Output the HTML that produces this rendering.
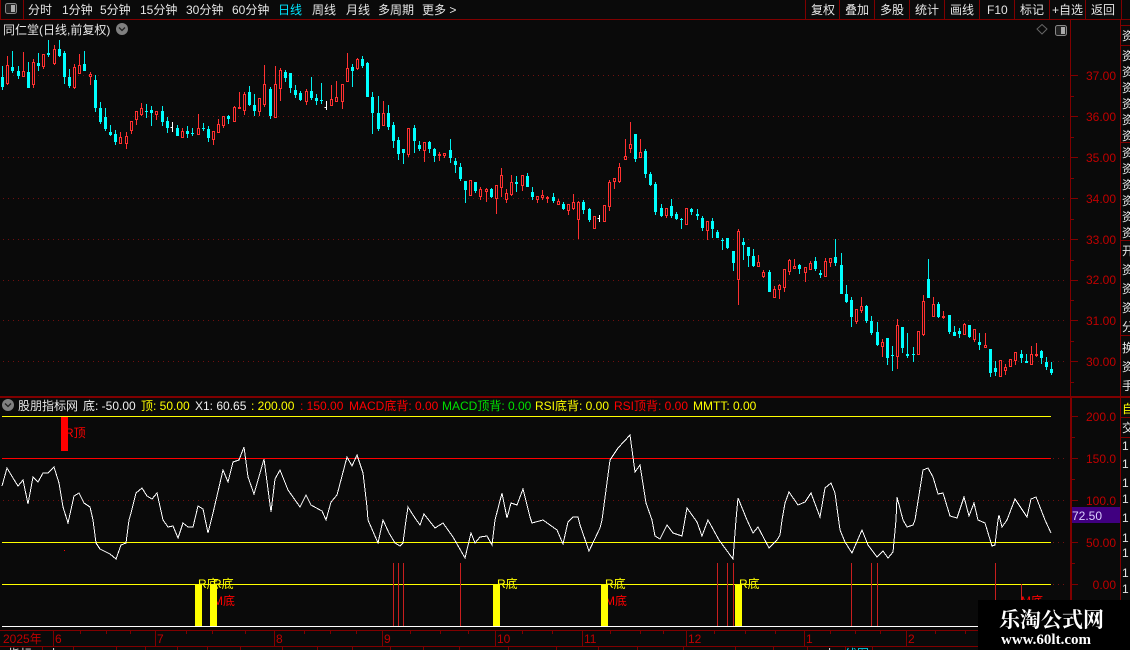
<!DOCTYPE html>
<html>
<head>
<meta charset="utf-8">
<style>
html,body{margin:0;padding:0;background:#0a0a0a;width:1130px;height:650px;overflow:hidden}
svg{display:block}
text{font-family:"Liberation Sans","WenQuanYi Zen Hei","Noto Sans CJK SC",sans-serif;font-size:12px}
.t{fill:#e6e6e6}
.a{fill:#c00000;text-anchor:end}
.s{fill:#e6e6e6}
</style>
</head>
<body>
<svg width="1130" height="650" viewBox="0 0 1130 650" xmlns="http://www.w3.org/2000/svg">
<rect width="1130" height="650" fill="#0a0a0a"/>

<!-- grid dots -->
<g stroke="#701010" stroke-width="1" stroke-dasharray="1 4" fill="none" shape-rendering="crispEdges">
<path d="M3 75.5H1068M3 116.5H1068M3 157.5H1068M3 198.5H1068M3 239.5H1068M3 280.5H1068M3 320.5H1068M3 361.5H1068"/>
<path d="M3 500.5H1068M1053 458.5H1068M1053 542.5H1068M1053 584.5H1068"/>
</g>

<!-- frame lines -->
<g fill="#800000" shape-rendering="crispEdges">
<rect x="0" y="19" width="1130" height="1"/>
<rect x="0" y="0" width="1" height="19"/>
<rect x="23" y="0" width="1" height="19"/>
<rect x="805" y="0" width="1" height="19"/><rect x="839" y="0" width="1" height="19"/><rect x="874" y="0" width="1" height="19"/><rect x="909" y="0" width="1" height="19"/><rect x="944" y="0" width="1" height="19"/><rect x="979" y="0" width="1" height="19"/><rect x="1014" y="0" width="1" height="19"/><rect x="1049" y="0" width="1" height="19"/><rect x="1085" y="0" width="1" height="19"/><rect x="1121" y="0" width="1" height="19"/>
<rect x="1070" y="20" width="1" height="376"/>
<rect x="1070" y="396" width="2" height="234"/>
<rect x="1120" y="20" width="1" height="610"/>
<rect x="0" y="396" width="1130" height="2"/>
<rect x="1121" y="25" width="9" height="1"/><rect x="1121" y="45" width="9" height="1"/><rect x="1121" y="142" width="9" height="1"/><rect x="1121" y="240" width="9" height="1"/><rect x="1121" y="335" width="9" height="1"/><rect x="1121" y="417" width="9" height="1"/><rect x="1121" y="437" width="9" height="1"/>
<rect x="0" y="630" width="1130" height="1"/>
<rect x="0" y="646" width="1130" height="1"/>
</g>

<!-- axis ticks -->
<path shape-rendering="crispEdges" stroke="#800000" fill="none" d="M1071 75.5h7M1071 116.5h7M1071 157.5h7M1071 198.5h7M1071 239.5h7M1071 280.5h7M1071 320.5h7M1071 361.5h7M1071 96.5h3M1071 137.5h3M1071 178.5h3M1071 219.5h3M1071 260.5h3M1071 300.5h3M1071 341.5h3M1071 382.5h3M1072 416.5h6M1072 458.5h6M1072 500.5h6M1072 542.5h6M1072 584.5h6M1072 437.5h3M1072 479.5h3M1072 563.5h3M1072 605.5h3M53.5 631V646M155.5 631V646M274.5 631V646M382.5 631V646M495.5 631V646M582.5 631V646M686.5 631V646M804.5 631V646M906.5 631V646M80.5 631v3M106.5 631v3M130.5 631v3M186.5 631v3M212.5 631v3M245.5 631v3M304.5 631v3M330.5 631v3M356.5 631v3M410.5 631v3M440.5 631v3M468.5 631v3M522.5 631v3M552.5 631v3M610.5 631v3M640.5 631v3M663.5 631v3M714.5 631v3M745.5 631v3M775.5 631v3M830.5 631v3M855.5 631v3M880.5 631v3M935.5 631v3M965.5 631v3M42.5 647v3M73.5 647v3M116.5 647v3M145.5 647v3M177.5 647v3M207.5 647v3M240.5 647v3M282.5 647v3M317.5 647v3M352.5 647v3M390.5 647v3M423.5 647v3M459.5 647v3M508.5 647v3M556.5 647v3M598.5 647v3M637.5 647v3M683.5 647v3M735.5 647v3M773.5 647v3M807.5 647v3M845.5 647v3M872.5 647v3"/>

<!-- top toolbar -->
<g class="t">
<text class="t" x="28" y="14">分时</text>
<text class="t" x="62" y="14">1分钟</text>
<text class="t" x="100" y="14">5分钟</text>
<text class="t" x="140" y="14">15分钟</text>
<text class="t" x="186" y="14">30分钟</text>
<text class="t" x="232" y="14">60分钟</text>
<text x="278" y="14" fill="#00e6ff">日线</text>
<text class="t" x="312" y="14">周线</text>
<text class="t" x="346" y="14">月线</text>
<text class="t" x="378" y="14">多周期</text>
<text class="t" x="422" y="14">更多 &gt;</text>
<text class="t" x="811" y="14">复权</text>
<text class="t" x="845" y="14">叠加</text>
<text class="t" x="880" y="14">多股</text>
<text class="t" x="915" y="14">统计</text>
<text class="t" x="950" y="14">画线</text>
<text class="t" x="987" y="14">F10</text>
<text class="t" x="1020" y="14">标记</text>
<text class="t" x="1052" y="14">+自选</text>
<text class="t" x="1091" y="14">返回</text>
</g>
<!-- layout icon -->
<rect x="5.5" y="3.5" width="11" height="10" rx="2" fill="#222" stroke="#888"/>
<rect x="11" y="5" width="4" height="7" fill="#aaa"/>

<!-- title -->
<text class="t" x="3" y="34">同仁堂(日线,前复权)</text>
<circle cx="122" cy="29" r="6" fill="#808080"/>
<path d="M119 27.5l3 3 3-3" fill="none" stroke="#222" stroke-width="1.3"/>
<path d="M1042 24.5l5 4.5-5 5-5-5z" fill="none" stroke="#666"/>
<rect x="1055.5" y="25.5" width="11" height="10" rx="2" fill="#222" stroke="#888"/>
<rect x="1061" y="27" width="4" height="7" fill="#aaa"/>

<!-- candles: cyan wicks -->
<path shape-rendering="crispEdges" transform="translate(.5 0)" stroke="#00f0f0" fill="none" d="M2 66V90M12 51V73M18 66V79M28 62V88M38 53V71M48 40V57M59 40V57M64 51V84M69 69V88M84 51V71M95 75V112M100 102V124M105 108V131M110 125V136M115 130V145M146 104V118M151 106V126M162 106V126M167 117V133M177 125V136M187 126V138M192 128V136M203 123V131M208 126V142M228 115V124M249 86V106M254 94V116M270 87V119M285 70V82M290 73V93M295 85V98M300 91V101M311 77V100M316 94V105M321 83V104M352 64V87M362 56V68M367 62V97M372 92V134M378 96V131M388 105V130M393 122V148M398 137V160M403 149V164M414 125V153M419 141V151M429 141V153M434 148V162M450 139V163M455 158V173M460 163V181M465 181V203M475 182V193M491 188V198M516 176V192M527 173V187M532 187V200M553 193V203M563 202V210M583 200V214M589 208V222M635 134V162M645 149V178M650 172V186M655 182V215M661 204V217M671 199V218M676 212V220M681 218V229M691 208V215M697 209V220M702 216V231M712 218V238M717 230V238M722 238V250M727 238V249M733 251V271M743 238V260M748 247V267M753 249V267M769 270V292M799 264V274M815 257V271M820 270V278M835 239V266M841 253V294M846 285V303M851 297V327M866 305V323M871 316V335M877 322V346M887 338V365M892 346V371M902 327V353M907 333V358M913 347V362M928 259V298M938 302V318M949 315V334M954 326V336M959 328V338M969 325V338M979 333V350M990 349V377M995 361V376M1021 350V363M1026 354V363M1041 350V364M1046 357V370M1051 362V375"/>
<!-- cyan bodies -->
<path shape-rendering="crispEdges" transform="translate(.5 0)" stroke="#00ffff" stroke-width="3" fill="none" d="M2 77V87M12 67V71M18 71V76M28 72V88M38 63V66M48 53V55M59 49V56M64 53V77M69 77V86M84 64V71M95 80V108M100 108V122M105 117V129M110 132V135M115 134V142M146 111V112M151 110V113M162 111V122M167 121V128M177 128V136M187 131V134M192 133V134M203 128V129M208 129V138M228 116V119M249 92V105M254 105V111M270 89V116M285 72V78M290 73V88M295 90V95M300 93V100M311 91V98M316 98V101M321 100V101M352 67V71M362 59V66M367 63V97M372 97V113M378 113V129M388 113V127M393 125V141M398 140V154M403 149V153M414 128V141M419 145V149M429 142V149M434 149V156M450 150V158M455 161V165M460 167V179M465 181V190M475 182V191M491 189V197M516 182V184M527 176V187M532 192V197M553 197V201M563 204V209M583 202V210M589 209V220M635 134V159M645 151V174M650 174V185M655 184V212M661 208V216M671 206V216M676 214V219M681 219V220M691 209V212M697 214V216M702 218V228M712 221V229M717 232V238M722 240V241M727 238V248M733 251V263M743 242V245M748 247V256M753 256V266M769 272V292M799 265V269M815 261V269M820 273V275M835 257V263M841 265V294M846 294V302M851 300V317M866 306V321M871 321V333M877 332V345M887 338V358M892 355V356M902 327V348M907 354V356M913 354V355M928 279V298M938 304V317M949 315V332M954 332V336M959 331V334M969 325V337M979 342V345M990 349V373M995 368V372M1021 354V358M1026 361V363M1041 351V358M1046 362V367M1051 369V373"/>
<!-- red wicks -->
<path shape-rendering="crispEdges" transform="translate(.5 0)" stroke="#ff3030" fill="none" d="M7 56V85M23 52V76M33 59V88M43 54V69M54 45V65M74 64V89M79 54V73M90 72V85M120 132V143M126 132V149M131 121V134M136 111V125M141 103V116M156 111V120M182 128V137M198 114V134M213 131V145M218 119V132M223 116V128M234 106V121M239 92V109M244 92V115M259 98V116M264 65V107M275 66V118M280 68V101M306 89V105M331 85V105M336 81V101M342 84V109M347 53V81M357 58V70M383 101V125M408 128V157M424 142V162M439 152V161M444 153V158M470 180V195M480 187V200M486 188V202M496 185V214M501 168V197M506 189V203M511 175V196M522 175V191M537 196V203M542 190V200M547 196V203M558 199V205M568 204V215M573 194V210M578 201V239M594 216V228M604 205V222M609 180V211M614 178V189M619 163V183M625 139V160M630 122V153M640 139V158M666 208V218M686 208V224M707 221V240M738 229V305M758 255V266M763 270V278M774 286V297M779 284V299M784 269V292M789 259V275M794 259V269M805 267V282M810 261V269M825 258V276M830 258V267M856 309V324M861 297V313M882 339V357M897 319V369M918 331V354M923 295V336M933 297V316M943 311V319M964 323V334M974 329V342M985 333V348M1000 360V377M1005 364V375M1010 359V367M1015 352V365M1031 346V365M1036 343V357"/>
<!-- red bodies -->
<path shape-rendering="crispEdges" transform="translate(.5 .5)" stroke="#ff3030" fill="#0a0a0a" d="M6 65h2V83h-2zM22 71h2V76h-2zM32 62h2V84h-2zM42 54h2V66h-2zM53 49h2V63h-2zM73 67h2V87h-2zM78 65h2V73h-2zM89 74h2V76h-2zM119 137h2V143h-2zM125 136h2V143h-2zM130 121h2V130h-2zM135 111h2V119h-2zM140 108h2V114h-2zM155 111h2V114h-2zM181 131h2V137h-2zM197 128h2V134h-2zM212 131h2V139h-2zM217 124h2V132h-2zM222 116h2V125h-2zM233 107h2V121h-2zM238 107h2V108h-2zM243 94h2V110h-2zM258 98h2V111h-2zM263 84h2V104h-2zM274 84h2V117h-2zM279 70h2V88h-2zM305 91h2V101h-2zM330 99h2V105h-2zM335 97h2V101h-2zM341 84h2V101h-2zM346 68h2V81h-2zM356 59h2V68h-2zM382 113h2V125h-2zM407 128h2V154h-2zM423 142h2V150h-2zM438 154h2V155h-2zM443 153h2V155h-2zM469 180h2V195h-2zM479 189h2V196h-2zM485 189h2V191h-2zM495 185h2V198h-2zM500 175h2V187h-2zM505 193h2V199h-2zM510 182h2V194h-2zM521 175h2V185h-2zM536 196h2V199h-2zM541 195h2V197h-2zM546 197h2V198h-2zM557 201h2V204h-2zM567 204h2V210h-2zM572 202h2V208h-2zM577 202h2V219h-2zM593 216h2V228h-2zM603 205h2V221h-2zM608 182h2V206h-2zM613 178h2V181h-2zM618 167h2V181h-2zM624 156h2V159h-2zM629 144h2V148h-2zM639 152h2V157h-2zM665 208h2V215h-2zM685 208h2V224h-2zM706 221h2V230h-2zM737 231h2V279h-2zM757 262h2V266h-2zM762 272h2V276h-2zM773 289h2V297h-2zM778 285h2V289h-2zM783 269h2V287h-2zM788 260h2V271h-2zM793 266h2V268h-2zM804 267h2V272h-2zM809 263h2V269h-2zM824 261h2V276h-2zM829 258h2V262h-2zM855 309h2V321h-2zM860 306h2V310h-2zM881 342h2V346h-2zM896 325h2V356h-2zM917 331h2V354h-2zM922 301h2V334h-2zM932 304h2V316h-2zM942 316h2V317h-2zM963 324h2V334h-2zM973 329h2V339h-2zM984 345h2V347h-2zM999 360h2V376h-2zM1004 367h2V370h-2zM1009 359h2V366h-2zM1014 352h2V360h-2zM1030 354h2V364h-2zM1035 354h2V355h-2z"/>
<!-- white doji -->
<path shape-rendering="crispEdges" transform="translate(.5 0)" stroke="#fff" fill="none" d="M172 122V132M170 127.5h2M326 101V110M324 107.5h2M599 215V222M597 218.5h2"/>

<!-- axis labels upper -->
<text class="a" x="1116" y="80">37.00</text>
<text class="a" x="1116" y="121">36.00</text>
<text class="a" x="1116" y="162">35.00</text>
<text class="a" x="1116" y="203">34.00</text>
<text class="a" x="1116" y="244">33.00</text>
<text class="a" x="1116" y="284">32.00</text>
<text class="a" x="1116" y="325">31.00</text>
<text class="a" x="1116" y="366">30.00</text>

<!-- right clipped side text -->
<text class="s" x="1122" y="40">资</text>
<text class="s" x="1122" y="60">资</text><text class="s" x="1122" y="76">资</text><text class="s" x="1122" y="92">资</text><text class="s" x="1122" y="108">资</text><text class="s" x="1122" y="124">资</text><text class="s" x="1122" y="140">资</text>
<text class="s" x="1122" y="157">资</text><text class="s" x="1122" y="173">资</text><text class="s" x="1122" y="189">资</text><text class="s" x="1122" y="205">资</text><text class="s" x="1122" y="221">资</text><text class="s" x="1122" y="237">资</text>
<text class="s" x="1122" y="255">开</text><text class="s" x="1122" y="274">资</text><text class="s" x="1122" y="293">资</text><text class="s" x="1122" y="312">资</text><text class="s" x="1122" y="331">分</text>
<text class="s" x="1122" y="352">换</text><text class="s" x="1122" y="371">资</text><text class="s" x="1122" y="390">手</text>
<text x="1122" y="413" fill="#ffff00">自</text>
<text class="s" x="1122" y="432">交</text>
<text class="s" x="1122" y="450">1</text><text class="s" x="1122" y="468">1</text><text class="s" x="1122" y="487">1</text><text class="s" x="1122" y="503">1</text><text class="s" x="1122" y="522">1</text><text class="s" x="1122" y="542">1</text><text class="s" x="1122" y="557">1</text><text class="s" x="1122" y="577">1</text><text class="s" x="1122" y="593">1</text>

<!-- lower panel header -->
<circle cx="8" cy="405" r="6" fill="#808080"/>
<path d="M5 403.5l3 3 3-3" fill="none" stroke="#222" stroke-width="1.3"/>
<text class="t" x="18" y="410">股朋指标网</text>
<text fill="#f0f0f0" x="83" y="410">底: -50.00</text>
<text fill="#ffff00" x="141" y="410">顶: 50.00</text>
<text fill="#f0f0f0" x="195" y="410">X1: 60.65</text>
<text fill="#ffff00" x="251" y="410">: 200.00</text>
<text fill="#ff0000" x="300" y="410">: 150.00</text>
<text fill="#ff0000" x="349" y="410">MACD底背: 0.00</text>
<text fill="#00e000" x="442" y="410">MACD顶背: 0.00</text>
<text fill="#ffff00" x="535" y="410">RSI底背: 0.00</text>
<text fill="#ff0000" x="614" y="410">RSI顶背: 0.00</text>
<text fill="#ffff00" x="693" y="410">MMTT: 0.00</text>

<!-- lower panel lines -->
<g shape-rendering="crispEdges">
<rect x="2" y="416" width="1049" height="1" fill="#ffff00"/>
<rect x="2" y="458" width="1049" height="1" fill="#ff0000"/>
<rect x="2" y="542" width="1049" height="1" fill="#ffff00"/>
<rect x="2" y="584" width="1049" height="1" fill="#ffff00"/>
<rect x="2" y="626" width="1049" height="1" fill="#ffffff"/>
<rect x="64" y="550" width="1" height="1" fill="#ff0000"/>
<path stroke="#c81e1e" fill="none" d="M393.5 563V626M398.5 563V626M403.5 563V626M460.5 563V626M717.5 563V626M727.5 563V626M733.5 563V626M851.5 563V626M871.5 563V626M877.5 563V626M995.5 563V626M1021.5 584V600"/>
</g>
<text fill="#ff0000" x="65" y="437">R顶</text>
<rect x="61" y="417" width="7" height="34" fill="#ff0000" shape-rendering="crispEdges"/>

<!-- RSI line -->
<polyline fill="none" stroke="#ffffff" stroke-width="1" shape-rendering="crispEdges" points="2,486 7,468 13,478 18,486 23,480 28,504 33,477 38,482 43,473 48,473 54,467 59,483 63,507 68,523 74,496 79,493 84,503 90,507 93,520 96,543 100,549 110,554 116,559 121,545 126,543 129,520 131,513 136,493 142,488 147,496 152,499 157,493 163,520 168,527 173,526 178,538 183,523 188,527 193,527 198,506 203,509 208,533 213,513 223,470 228,482 233,462 239,460 244,447 248,477 254,494 264,459 271,512 275,479 280,470 288,490 300,507 306,495 311,505 322,511 326,520 331,502 337,495 347,457 352,466 357,455 363,473 367,507 368,520 378,543 383,520 389,533 395,543 400,546 403,543 406,520 408,507 415,518 420,525 424,514 435,528 443,523 453,537 465,558 471,533 475,543 480,537 487,536 492,545 495,520 502,493 507,518 511,503 517,505 523,489 530,517 532,523 543,520 557,530 563,544 568,522 573,517 578,517 580,525 589,551 600,528 602,520 610,460 618,448 630,435 635,472 640,465 646,503 652,520 655,536 660,539 667,525 673,533 682,536 687,508 697,522 702,536 708,520 719,540 733,559 736,520 738,498 747,520 753,533 758,527 769,548 777,540 780,535 782,520 785,503 789,492 798,505 805,502 811,493 820,517 825,488 831,483 835,493 840,530 845,542 852,553 862,530 868,545 877,557 883,551 888,558 893,552 896,520 897,497 903,520 907,527 913,525 915,520 923,470 928,468 933,477 938,494 943,493 950,516 957,518 964,497 969,516 974,503 978,520 985,523 992,546 995,545 998,520 999,515 1002,527 1007,520 1015,499 1027,517 1031,499 1036,497 1040,507 1045,520 1051,533"/>

<!-- signal labels (under the bars) -->
<text fill="#ff0000" x="213" y="605">M底</text>
<text fill="#ff0000" x="605" y="605">M底</text>
<text fill="#ff0000" x="1021" y="605">M底</text>
<text fill="#ffff00" x="198" y="588">R底</text>
<text fill="#ffff00" x="213" y="588">R底</text>
<text fill="#ffff00" x="497" y="588">R底</text>
<text fill="#ffff00" x="605" y="588">R底</text>
<text fill="#ffff00" x="739" y="588">R底</text>

<!-- signal bars -->
<g fill="#ffff00" shape-rendering="crispEdges">
<rect x="195" y="585" width="7" height="41"/>
<rect x="210" y="585" width="7" height="41"/>
<rect x="493" y="585" width="7" height="41"/>
<rect x="601" y="585" width="7" height="41"/>
<rect x="735" y="585" width="7" height="41"/>
</g>

<!-- lower axis labels -->
<text class="a" x="1116" y="421">200.0</text>
<text class="a" x="1116" y="463">150.0</text>
<text class="a" x="1116" y="505">100.0</text>
<text class="a" x="1116" y="547">50.00</text>
<text class="a" x="1116" y="589">0.00</text>
<rect x="1072" y="507" width="48" height="16" fill="#400080"/>
<text x="1072" y="520" fill="#dcd0ff">72.50</text>

<!-- time axis -->
<text fill="#c00000" x="3" y="643">2025年</text>
<text fill="#c00000" x="55" y="643">6</text>
<text fill="#c00000" x="157" y="643">7</text>
<text fill="#c00000" x="276" y="643">8</text>
<text fill="#c00000" x="384" y="643">9</text>
<text fill="#c00000" x="497" y="643">10</text>
<text fill="#c00000" x="584" y="643">11</text>
<text fill="#c00000" x="688" y="643">12</text>
<text fill="#c00000" x="806" y="643">1</text>
<text fill="#c00000" x="908" y="643">2</text>

<!-- bottom clipped row -->
<text class="t" x="8" y="658">指标</text>
<text class="t" x="48" y="658">上</text>
<text class="t" x="824" y="658">上</text>
<text x="845" y="658" fill="#00e6ff">线图</text>

<!-- watermark -->
<rect x="978" y="600" width="152" height="50" fill="#000"/>
<text x="999" y="627" fill="#fff" style="font-family:'Noto Serif CJK SC','Liberation Serif',serif;font-size:21px;font-weight:700">乐淘公式网</text>
<text x="1001" y="644" fill="#fff" style="font-family:'Liberation Serif',serif;font-size:15px;font-weight:700">www.60lt.com</text>
</svg>
</body>
</html>
